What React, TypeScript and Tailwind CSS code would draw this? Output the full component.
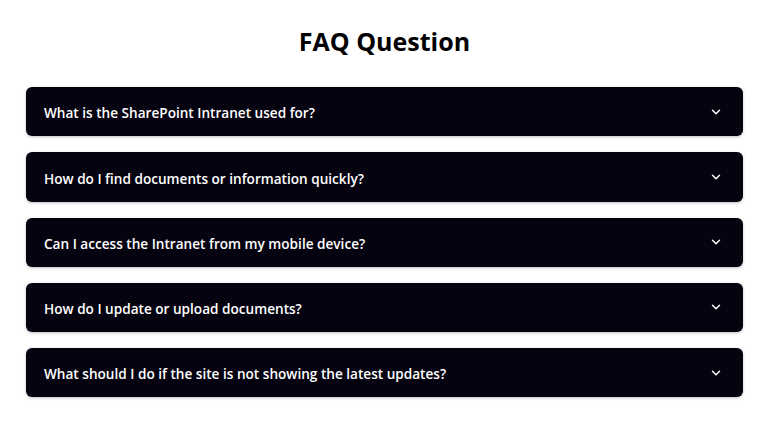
import { ChevronDown } from "lucide-react";

const faqs = [
  "What is the SharePoint Intranet used for?",
  "How do I find documents or information quickly?",
  "Can I access the Intranet from my mobile device?",
  "How do I update or upload documents?",
  "What should I do if the site is not showing the latest updates?",
];

export default function App() {
  return (
    <div className="min-h-screen bg-white px-[26px] pt-[25px]" style={{ fontFamily: '"Open Sans", "Noto Sans", sans-serif' }}>
      <h1 className="text-center text-[25px] leading-[32px] font-bold text-black">FAQ Question</h1>
      <div className="mt-[30px] flex flex-col gap-4">
        {faqs.map((q) => (
          <button
            key={q}
            className="flex h-[49.25px] w-full items-center justify-between rounded-md bg-[#05030f] pl-[18px] pr-[20px] text-left shadow-[0_1px_3px_rgba(0,0,0,0.25)]"
          >
            <span className="pt-[4px] text-[13.6px] font-semibold text-white">{q}</span>
            <ChevronDown size={14} strokeWidth={2.5} className="text-white" />
          </button>
        ))}
      </div>
    </div>
  );
}
